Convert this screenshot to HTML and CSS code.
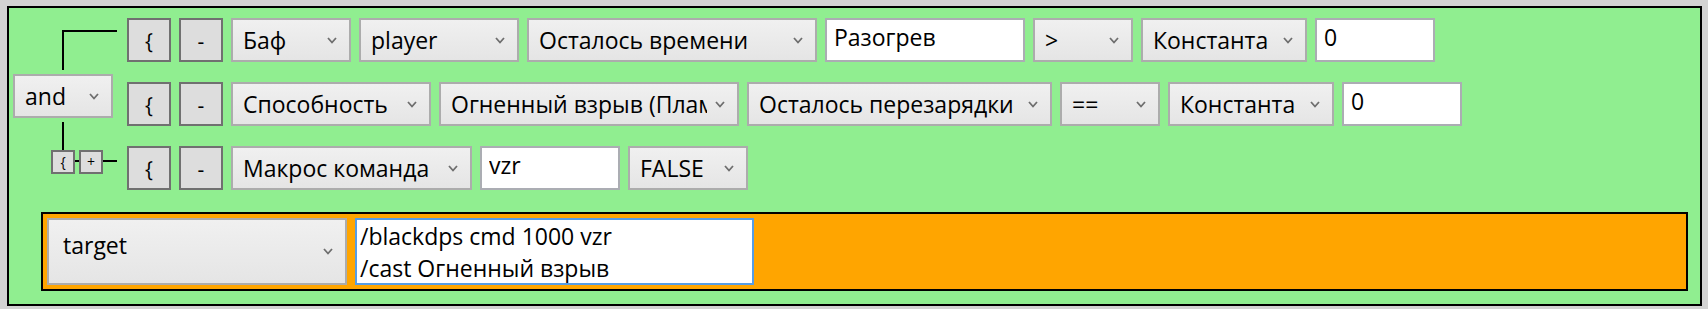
FILE: index.html
```html
<!DOCTYPE html>
<html lang="ru">
<head>
    <meta charset="UTF-8">
    <meta name="viewport" content="width=device-width, initial-scale=1.0">
    <title>Условие макроса</title>
    <link rel="stylesheet" href="styles.css">
</head>
<body>
    <div class="group">
        <div class="conds">
            <div class="logic">
                <div class="link-top"></div>
                <div class="combo combo-and">
                    <span class="combo-text">and</span>
                    <svg class="chev" width="10" height="7" viewBox="0 0 10 7"><path d="M1 1 L5 5.5 L9 1"/></svg>
                </div>
                <div class="link-down"></div>
                <div class="mini-row">
                    <button class="mini-btn">{</button>
                    <span class="link-h link-short"></span>
                    <button class="mini-btn">+</button>
                    <span class="link-h link-long"></span>
                </div>
            </div>

            <div class="rows">
                <div class="row">
                    <button class="btn">{</button>
                    <button class="btn">-</button>
                    <div class="combo w120"><span class="combo-text">Баф</span><svg class="chev" width="10" height="7" viewBox="0 0 10 7"><path d="M1 1 L5 5.5 L9 1"/></svg></div>
                    <div class="combo w160"><span class="combo-text">player</span><svg class="chev" width="10" height="7" viewBox="0 0 10 7"><path d="M1 1 L5 5.5 L9 1"/></svg></div>
                    <div class="combo w290"><span class="combo-text">Осталось времени</span><svg class="chev" width="10" height="7" viewBox="0 0 10 7"><path d="M1 1 L5 5.5 L9 1"/></svg></div>
                    <input class="field w200" type="text" value="Разогрев">
                    <div class="combo w100"><span class="combo-text">&gt;</span><svg class="chev" width="10" height="7" viewBox="0 0 10 7"><path d="M1 1 L5 5.5 L9 1"/></svg></div>
                    <div class="combo w166"><span class="combo-text">Константа</span><svg class="chev" width="10" height="7" viewBox="0 0 10 7"><path d="M1 1 L5 5.5 L9 1"/></svg></div>
                    <input class="field w120" type="text" value="0">
                </div>
                <div class="row">
                    <button class="btn">{</button>
                    <button class="btn">-</button>
                    <div class="combo w200"><span class="combo-text">Способность</span><svg class="chev" width="10" height="7" viewBox="0 0 10 7"><path d="M1 1 L5 5.5 L9 1"/></svg></div>
                    <div class="combo w300"><span class="combo-text">Огненный взрыв (Пламя)</span><svg class="chev" width="10" height="7" viewBox="0 0 10 7"><path d="M1 1 L5 5.5 L9 1"/></svg></div>
                    <div class="combo w305"><span class="combo-text">Осталось перезарядки</span><svg class="chev" width="10" height="7" viewBox="0 0 10 7"><path d="M1 1 L5 5.5 L9 1"/></svg></div>
                    <div class="combo w100"><span class="combo-text">==</span><svg class="chev" width="10" height="7" viewBox="0 0 10 7"><path d="M1 1 L5 5.5 L9 1"/></svg></div>
                    <div class="combo w166"><span class="combo-text">Константа</span><svg class="chev" width="10" height="7" viewBox="0 0 10 7"><path d="M1 1 L5 5.5 L9 1"/></svg></div>
                    <input class="field w120" type="text" value="0">
                </div>
                <div class="row">
                    <button class="btn">{</button>
                    <button class="btn">-</button>
                    <div class="combo w241"><span class="combo-text">Макрос команда</span><svg class="chev" width="10" height="7" viewBox="0 0 10 7"><path d="M1 1 L5 5.5 L9 1"/></svg></div>
                    <input class="field w140" type="text" value="vzr">
                    <div class="combo w120"><span class="combo-text">FALSE</span><svg class="chev" width="10" height="7" viewBox="0 0 10 7"><path d="M1 1 L5 5.5 L9 1"/></svg></div>
                </div>
            </div>
        </div>

        <div class="action">
            <div class="combo combo-target"><span class="combo-text">target</span><svg class="chev" width="10" height="7" viewBox="0 0 10 7"><path d="M1 1 L5 5.5 L9 1"/></svg></div>
            <textarea class="macro">/blackdps cmd 1000 vzr
/cast Огненный взрыв</textarea>
        </div>
    </div>
</body>
</html>
```

FILE: styles.css
```css
body{
    margin: 0;
    background: #d3d3d3;
    font-family: "Open Sans", "Noto Sans", sans-serif;
    font-size: 23px;
    color: #000;
}
.group{
    width: 1695px;
    height: 300px;
    margin: 6px 0 0 7px;
    box-sizing: border-box;
    border: 2px solid #000;
    background: #90ee90;
    padding-top: 10px;
}
.conds{
    display: flex;
}

/* left column: logic operator and connectors */
.logic{
    display: flex;
    flex-direction: column;
    align-items: flex-start;
    width: 118px;
    flex-shrink: 0;
}
.link-top{
    margin: 12px 0 0 53px;
    width: 55px;
    height: 40px;
    box-sizing: border-box;
    border-top: 2px solid #000;
    border-left: 2px solid #000;
}
.combo-and{
    margin: 4px 0 0 4px;
    width: 100px;
}
.link-down{
    margin: 4px 0 0 53px;
    width: 2px;
    height: 28px;
    background: #000;
}
.mini-row{
    display: flex;
    align-items: flex-start;
    margin-left: 42px;
}
.mini-btn{
    width: 24px;
    height: 24px;
    padding: 0;
    box-sizing: border-box;
    border: 2px solid #707070;
    background: #dddddd;
    font-family: inherit;
    font-size: 14px;
    line-height: 1;
    color: #000;
}
.link-h{
    height: 2px;
    margin-top: 10px;
    background: #000;
}
.link-short{
    width: 4px;
}
.link-long{
    width: 14px;
}

/* condition rows */
.rows{
    display: flex;
    flex-direction: column;
    gap: 20px;
}
.row{
    display: flex;
    gap: 8px;
}
.btn{
    width: 44px;
    height: 44px;
    padding: 2px 0 0;
    box-sizing: border-box;
    border: 2px solid #707070;
    background: #dddddd;
    font-family: inherit;
    font-size: 21px;
    color: #000;
}
.combo{
    display: flex;
    align-items: center;
    height: 44px;
    box-sizing: border-box;
    border: 2px solid #acacac;
    background: linear-gradient(#f0f0f0, #e5e5e5);
    padding: 0 12px 0 10px;
}
.combo-text{
    flex: 1;
    overflow: hidden;
    white-space: nowrap;
    line-height: 31px;
}
.chev{
    flex-shrink: 0;
    margin-left: 8px;
}
.chev path{
    fill: none;
    stroke: #6e6e6e;
    stroke-width: 1.8;
}
.field{
    height: 44px;
    box-sizing: border-box;
    border: 2px solid #abadb3;
    background: #fff;
    padding: 5px 7px 11px;
    font-family: inherit;
    font-size: 23px;
    line-height: 24px;
    color: #000;
    outline: none;
}
.w100{ width: 100px; }
.w120{ width: 120px; }
.w140{ width: 140px; }
.w160{ width: 160px; }
.w166{ width: 166px; }
.w200{ width: 200px; }
.w241{ width: 241px; }
.w290{ width: 290px; }
.w300{ width: 300px; }
.w305{ width: 305px; }

/* action panel */
.action{
    display: flex;
    gap: 8px;
    margin: 22px 12px 0 32px;
    border: 2px solid #000;
    background: #ffa500;
    padding: 4px;
}
.combo-target{
    width: 300px;
    height: 67px;
    padding: 0 12px 0 14px;
}
.combo-target .combo-text{
    padding-bottom: 13px;
}
.macro{
    width: 399px;
    height: 67px;
    box-sizing: border-box;
    margin: 0;
    border: 2px solid #569de5;
    background: #fff;
    padding: 0 3px;
    font-family: inherit;
    font-size: 23px;
    line-height: 32px;
    color: #000;
    resize: none;
    overflow: hidden;
    outline: none;
}
```
